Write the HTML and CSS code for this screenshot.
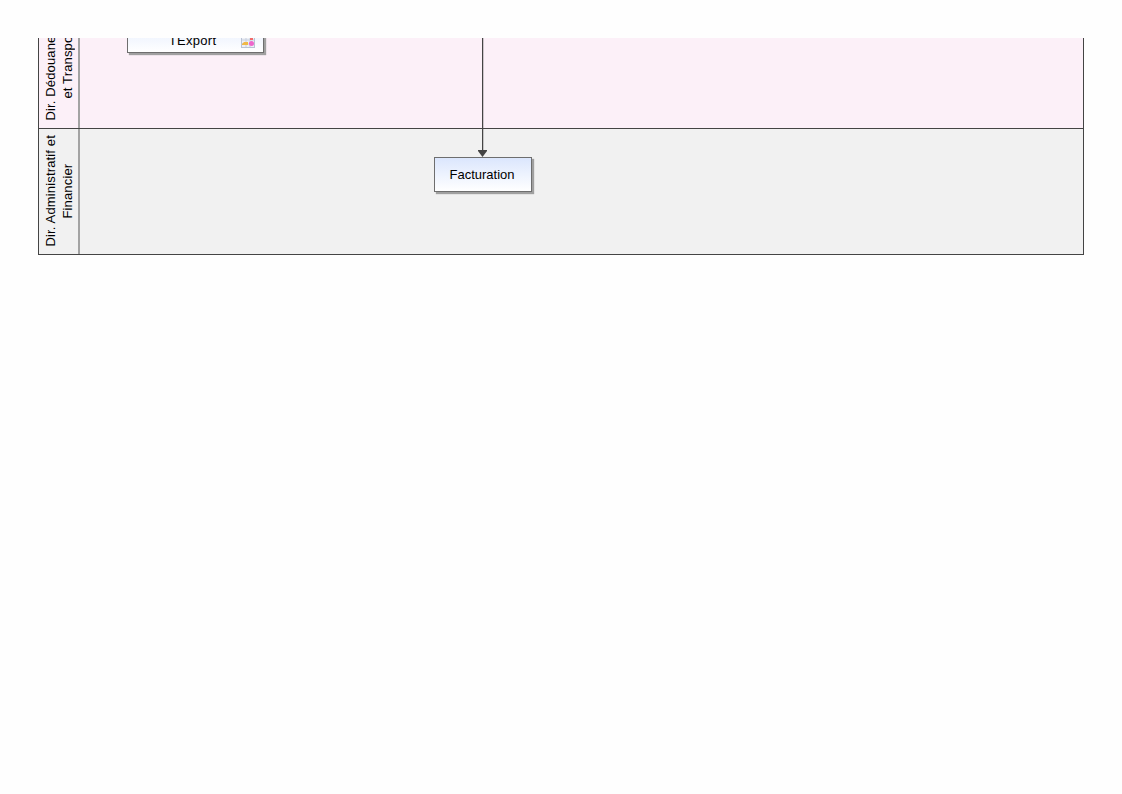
FILE: index.html
```html
<!DOCTYPE html>
<html lang="fr">
<head>
<meta charset="utf-8">
<title>Processus</title>
<link rel="stylesheet" href="styles.css">
</head>
<body>
<main class="diagram">
  <section class="lane lane-pink">
    <header class="lane-head"><div class="lane-title">Dir. Dédouanement<br>et Transport</div></header>
    <div class="lane-body"></div>
  </section>
  <section class="lane lane-grey">
    <header class="lane-head"><div class="lane-title">Dir. Administratif et<br>Financier</div></header>
    <div class="lane-body"></div>
  </section>
  <div class="node node-export">
    <span class="node-label">TExport</span>
    <svg class="sheet-icon" width="14" height="12" viewBox="0 0 14 12">
      <rect x="0.5" y="0.5" width="13" height="11" fill="#eef0f6" stroke="#b9c2d4"/>
      <path d="M5 1v10M9 1v10M1 4h12M1 8h12" stroke="#c9d0de"/>
      <path d="M1 8l2-2h4v3H1z" fill="#f0b848"/>
      <rect x="9" y="1" width="3" height="3" fill="#f26a6a"/>
      <circle cx="10.5" cy="7.5" r="2.5" fill="#ee66cc"/>
    </svg>
  </div>
  <div class="connector"></div>
  <div class="node node-billing"><span>Facturation</span></div>
</main>
</body>
</html>
```
FILE: styles.css
```css
html, body {
  margin: 0;
  background: #fefefe;
}
body {
  padding: 38px 0 0 38px;
  font-family: "Liberation Sans", Arial, sans-serif;
  font-size: 13px;
  color: #000;
}
.diagram {
  position: relative;
  box-sizing: border-box;
  width: 1046px;
  height: 217px;
  overflow: hidden;
  border: solid #444;
  border-width: 0 1px 1px;
}
.lane {
  display: flex;
  box-sizing: border-box;
}
.lane-pink {
  height: 91px;
  background: #fcf0f8;
  border-bottom: 1px solid #444;
}
.lane-grey {
  height: 125px;
  background: #f1f1f1;
}
.lane-head {
  box-sizing: border-box;
  width: 41px;
  flex: none;
  display: flex;
  flex-direction: column;
  align-items: center;
  justify-content: flex-end;
  padding: 0 0 7px 1px;
  border-right: 2px solid #a3a3a3;
  overflow: hidden;
}
.lane-title {
  writing-mode: vertical-rl;
  transform: rotate(180deg);
  white-space: nowrap;
  text-align: center;
  line-height: 17px;
  letter-spacing: 0.15px;
  flex: none;
}
.lane-body {
  flex: 1;
}
.node {
  position: absolute;
  box-sizing: border-box;
  display: flex;
  align-items: center;
  justify-content: center;
  border: 1px solid #6e6e6e;
  background: linear-gradient(#dbe6fd, #fff);
  box-shadow: 2px 2px 1px #a0a0a0;
}
.node-export {
  left: 88px;
  top: -25px;
  width: 137px;
  height: 40px;
  padding: 15px 6px 0 0;
}
.node-label {
  letter-spacing: 0.3px;
}
.sheet-icon {
  position: absolute;
  right: 8px;
  bottom: 4px;
}
.node-billing {
  left: 395px;
  top: 119px;
  width: 98px;
  height: 35px;
  padding-right: 2px;
}
.connector {
  position: absolute;
  left: 443px;
  top: 0;
  width: 1px;
  height: 114px;
  background: #444;
  box-shadow: 1px 0 0 rgba(68, 68, 68, 0.25);
}
.connector::after {
  content: "";
  position: absolute;
  left: -4px;
  bottom: -5px;
  width: 9px;
  height: 7px;
  background: #444;
  clip-path: polygon(0 0, 100% 0, 100% 15%, 50% 100%, 0 15%);
}
```
